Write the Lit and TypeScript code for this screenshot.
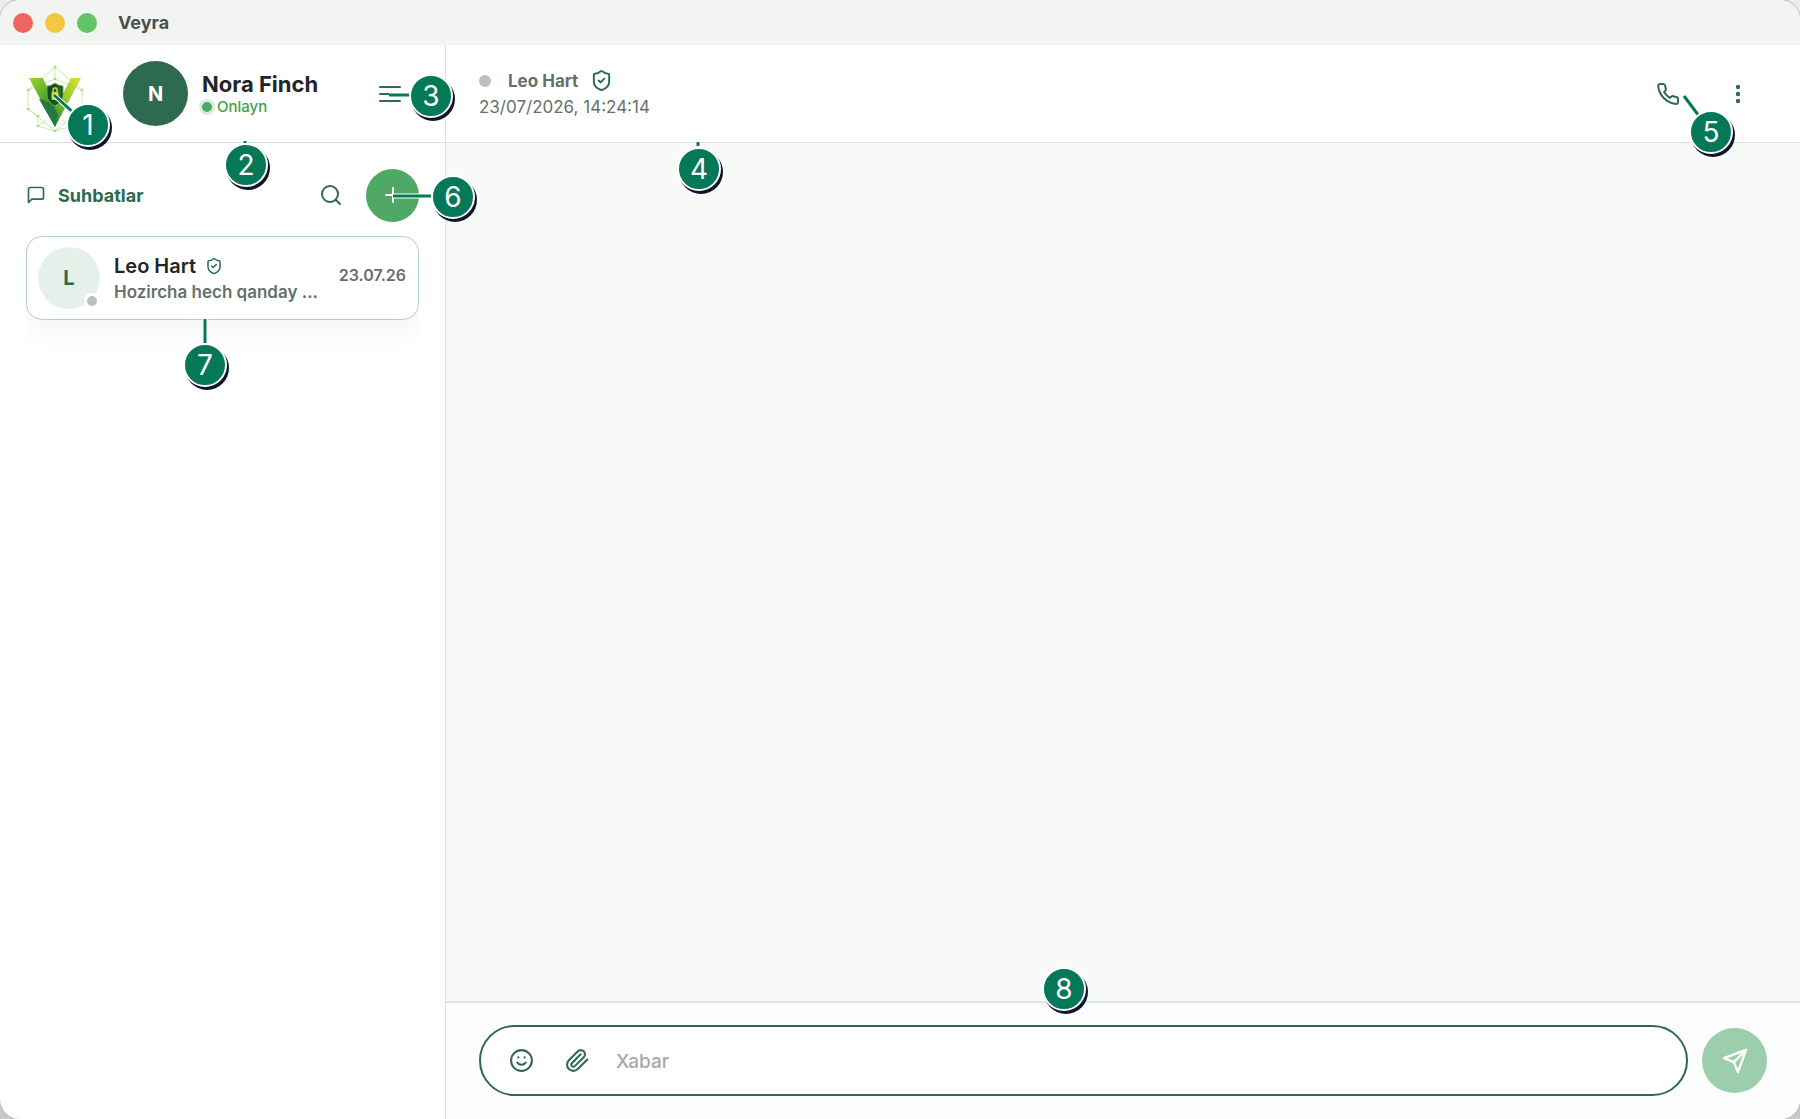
import { LitElement, html, css, svg } from "lit";
import { customElement, property } from "lit/decorators.js";
import { styleMap } from "lit/directives/style-map.js";

const icons: Record<string, unknown> = {
  shield: svg`<path d="M20 13c0 5-3.5 7.5-7.66 8.95a1 1 0 0 1-.67-.01C7.5 20.500 4 18 4 13V6a1 1 0 0 1 1-1c2 0 4.500-1.200 6.240-2.720a1.170 1.170 0 0 1 1.520 0C14.510 3.810 17 5 19 5a1 1 0 0 1 1 1z" /><path d="m9 12 2 2 4-4" />`,
  menu: svg`<path d="M2 5h20M2 12h15M2 19h20" />`,
  chat: svg`<path d="M21 15a2 2 0 0 1-2 2H7l-4 4V5a2 2 0 0 1 2-2h14a2 2 0 0 1 2 2z" />`,
  search: svg`<circle cx="11" cy="11" r="8" /><path d="m21 21-4.300-4.300" />`,
  plus: svg`<path d="M5 12h14M12 5v14" />`,
  phone: svg`<path d="M22 16.920v3a2 2 0 0 1-2.180 2 19.790 19.790 0 0 1-8.630-3.070 19.500 19.500 0 0 1-6-6 19.790 19.790 0 0 1-3.070-8.670A2 2 0 0 1 4.110 2h3a2 2 0 0 1 2 1.720 12.840 12.840 0 0 0 .7 2.810 2 2 0 0 1-.45 2.110L8.090 9.910a16 16 0 0 0 6 6l1.270-1.270a2 2 0 0 1 2.110-.45 12.840 12.840 0 0 0 2.810.7A2 2 0 0 1 22 16.920z" />`,
  dots: svg`<g fill="currentColor" stroke="none"><circle cx="12" cy="5" r="2.200" /><circle cx="12" cy="12" r="2.200" /><circle cx="12" cy="19" r="2.200" /></g>`,
  smile: svg`<circle cx="12" cy="12" r="10" /><path d="M8 14s1.500 2 4 2 4-2 4-2M9 9h.01M15 9h.01" />`,
  clip: svg`<path d="m21.440 11.050-9.190 9.190a6 6 0 0 1-8.490-8.490l8.570-8.570A4 4 0 1 1 18 8.840l-8.590 8.570a2 2 0 0 1-2.830-2.830l8.490-8.480" />`,
  send: svg`<path d="M21.500 2.500 2.500 9.500l8.500 3.500 3.500 8.500zM21.500 2.500 11 13" />`,
};

@customElement("vy-icon")
export class VyIcon extends LitElement {
  @property() name = "";
  @property({ type: Number }) size = 24;
  @property({ type: Number }) weight = 2;

  static styles = css`
    :host {
      display: inline-flex;
      flex: none;
    }
    .glyph {
      display: block;
      fill: none;
      stroke: currentColor;
      stroke-linecap: round;
      stroke-linejoin: round;
    }
  `;

  render() {
    return html`<svg
      class="glyph"
      viewBox="0 0 24 24"
      width=${this.size}
      height=${this.size}
      stroke-width=${this.weight}
      aria-hidden="true"
    >
      ${icons[this.name]}
    </svg>`;
  }
}

@customElement("vy-logo")
export class VyLogo extends LitElement {
  static styles = css`
    :host {
      display: block;
      flex: none;
    }
    .mark {
      display: block;
    }
  `;

  render() {
    const nodes = [
      [28, 2], [1, 25], [55, 25], [1, 44], [55, 44], [11, 61], [45, 61], [28, 66], [28, 14], [11, 51],
    ];
    return html`<svg class="mark" width="56" height="68" viewBox="0 0 56 68" role="img" aria-label="Veyra">
      <defs>
        <linearGradient id="left" x1="0" y1="0" x2="0.600" y2="1">
          <stop offset="0" stop-color="#a4d422" />
          <stop offset="0.450" stop-color="#5cae2c" />
          <stop offset="1" stop-color="#14693a" />
        </linearGradient>
        <linearGradient id="right" x1="1" y1="0" x2="0.300" y2="1">
          <stop offset="0" stop-color="#d3e534" />
          <stop offset="0.500" stop-color="#98cb2a" />
          <stop offset="1" stop-color="#2d8a3a" />
        </linearGradient>
      </defs>
      <g fill="none" stroke="#c3ebae" stroke-width="1">
        <path d="M28 2 1 25v19l27 22 27-22V25zM1 25l27-11 27 11M28 2v12M1 44l10 7v10l17 5 17-5V51l10-7M11 61l9-6M45 61l-9-6" />
      </g>
      <g fill="#a0e060">${nodes.map(([x, y]) => svg`<circle cx=${x} cy=${y} r="1.300" />`)}</g>
      <path d="M2 13h14l11 25 5 9-4 15z" fill="url(#left)" />
      <path d="M54 13H44L30 40l-6 4 4 18z" fill="url(#right)" />
      <path d="M12 34c9 2 15 6 19 15l-3 13z" fill="#237c3b" />
      <path d="M28 18c3 2 5 3 8 3v8c0 6-3 9-8 12-5-3-8-6-8-12v-8c3 0 5-1 8-3z" fill="#164b2a" stroke="#6aa943" stroke-width="1" />
      <path d="M28 20.500c2 1.500 4 2 6 2.300V29c0 4-2 7-6 9.500z" fill="#2c6b2c" />
      <rect x="24.500" y="27" width="7" height="8" rx="1" fill="#bdda38" />
      <path d="M26 27v-2a2 2 0 0 1 4 0v2" fill="none" stroke="#bdda38" stroke-width="1.500" />
    </svg>`;
  }
}

interface Callout {
  label: number;
  place: Record<string, string>;
  from?: [number, number];
  to?: [number, number];
}

const callouts: Callout[] = [
  { label: 1, place: { left: "88px", top: "125px" }, from: [-34, -30], to: [-12, -10] },
  { label: 2, place: { left: "246px", top: "165px" }, from: [-1, -24], to: [-1, -22] },
  { label: 3, place: { left: "431px", top: "96px" }, from: [-42, -1], to: [-22, -1] },
  { label: 4, place: { left: "699px", top: "169px" }, from: [-1, -27], to: [-1, -23] },
  { label: 5, place: { left: "calc(100% - 89px)", top: "132px" }, from: [-27, -36], to: [-12, -16] },
  { label: 6, place: { left: "453px", top: "197px" }, from: [-60, -1], to: [-22, -1] },
  { label: 7, place: { left: "205px", top: "365px" }, from: [0, -46], to: [0, -22] },
  { label: 8, place: { left: "calc(50% + 164px)", top: "calc(100% - 130px)" } },
];

@customElement("vy-callouts")
export class VyCallouts extends LitElement {
  static styles = css`
    :host {
      position: absolute;
      inset: 0;
      pointer-events: none;
    }
    .callout {
      position: absolute;
      width: 0;
      height: 0;
    }
    .leader {
      position: absolute;
      width: 1px;
      height: 1px;
      overflow: visible;
    }
    .halo {
      stroke: #fff;
      stroke-width: 5;
    }
    .line {
      stroke: #047857;
      stroke-width: 3;
    }
    .badge {
      position: absolute;
      left: -22px;
      top: -22px;
      box-sizing: border-box;
      width: 44px;
      height: 44px;
      border: 2px solid #fff;
      border-radius: 50%;
      background: #047857;
      box-shadow: 2px 3px 0 #11142d;
      color: #fff;
      font: 400 28px/40px Inter, "Open Sans", sans-serif;
      text-align: center;
    }
  `;

  render() {
    return callouts.map(
      ({ label, place, from, to }) => html`<div class="callout" style=${styleMap(place)}>
        ${from && to
          ? html`<svg class="leader" aria-hidden="true">
              <line class="halo" x1=${from[0]} y1=${from[1]} x2=${to[0]} y2=${to[1]} />
              <line class="line" x1=${from[0]} y1=${from[1]} x2=${to[0]} y2=${to[1]} />
            </svg>`
          : null}
        <span class="badge">${label}</span>
      </div>`
    );
  }
}

@customElement("app-root")
export class AppRoot extends LitElement {
  static styles = css`
    :host {
      display: block;
      background: linear-gradient(#ececec, #c8c8c8);
      color: #212529;
      font-family: Inter, "Liberation Sans", sans-serif;
      font-size: 16px;
    }
    * {
      box-sizing: border-box;
    }
    button {
      display: inline-flex;
      align-items: center;
      justify-content: center;
      flex: none;
      padding: 0;
      border: 0;
      background: none;
      color: #2d6a4f;
      font: inherit;
    }
    h1,
    h2,
    p {
      margin: 0;
    }
    .window {
      position: relative;
      display: flex;
      flex-direction: column;
      min-height: 100vh;
      overflow: hidden;
      border-radius: 20px;
      background: #fff;
      box-shadow: 0 0 0 1px #b8b8b8;
    }
    .titlebar {
      display: flex;
      align-items: center;
      gap: 12px;
      height: 45px;
      padding: 0 13px;
      background: #f2f4f2;
    }
    .light {
      width: 20px;
      height: 20px;
      border-radius: 50%;
    }
    .close {
      background: #ed6663;
    }
    .minimize {
      background: #f2c843;
    }
    .zoom {
      background: #62c466;
    }
    .app-name {
      padding-left: 9px;
      color: #4d4f4d;
      font-size: 18px;
      font-weight: 700;
    }
    .body {
      display: flex;
      flex: 1;
    }
    .sidebar {
      display: flex;
      flex: none;
      flex-direction: column;
      width: 446px;
      border-right: 1px solid #d8e5df;
    }
    .profile,
    .chat-header {
      display: flex;
      align-items: center;
      height: 98px;
      border-bottom: 1px solid #d3e2db;
    }
    .profile {
      padding: 0 43px 0 27px;
    }
    .logo {
      padding-top: 10px;
    }
    .avatar {
      display: flex;
      align-items: center;
      justify-content: center;
      flex: none;
      border-radius: 50%;
      font-weight: 700;
    }
    .avatar.own {
      width: 65px;
      height: 65px;
      margin: 0 14px 0 40px;
      background: #2d6a4f;
      color: #fff;
      font-size: 20px;
    }
    .who {
      flex: 1;
      padding-top: 2px;
    }
    .user-name {
      font-size: 22px;
      font-weight: 700;
      line-height: 24px;
    }
    .status {
      display: flex;
      align-items: center;
      gap: 5px;
      color: #43a047;
      font-size: 15px;
      font-weight: 500;
      line-height: 22px;
    }
    .online {
      width: 10px;
      height: 10px;
      border-radius: 50%;
      background: #4fa866;
      box-shadow: 0 0 0 3px #d8eedd;
    }
    .section {
      display: flex;
      align-items: center;
      height: 52px;
      margin: 26px 26px 15px;
      color: #2d6a4f;
    }
    .section-title {
      flex: 1;
      padding-left: 12px;
      font-size: 18px;
      font-weight: 700;
    }
    .add {
      width: 53px;
      height: 53px;
      margin-left: 23px;
      border-radius: 50%;
      background: #4fa866;
      color: #fff;
    }
    .list {
      overflow: hidden;
      margin: 0 26px;
      padding-bottom: 36px;
    }
    .item {
      display: flex;
      align-items: center;
      height: 84px;
      padding: 0 12px 0 11px;
      border: 1px solid #b0d3c3;
      border-radius: 16px;
      background: #fff;
      box-shadow: 0 14px 26px rgba(0, 0, 0, 0.04);
      color: inherit;
      text-decoration: none;
    }
    .avatar.peer {
      position: relative;
      width: 62px;
      height: 62px;
      margin-right: 14px;
      background: #e6f0eb;
      color: #2d6a4f;
      font-size: 20px;
    }
    .presence {
      border-radius: 50%;
      background: #b9c0c4;
    }
    .peer .presence {
      position: absolute;
      right: 0;
      bottom: 0;
      width: 16px;
      height: 16px;
      border: 3px solid #fff;
    }
    .summary {
      flex: 1;
      min-width: 0;
      padding-top: 2px;
    }
    .name-row {
      display: flex;
      align-items: center;
      gap: 9px;
      color: #2d6a4f;
    }
    .item-name {
      color: #212529;
      font-size: 20px;
      font-weight: 600;
      line-height: 26px;
    }
    .preview {
      color: #66706b;
      font-size: 17px;
      font-weight: 600;
      line-height: 26px;
      white-space: nowrap;
    }
    .date {
      padding-bottom: 6px;
      color: #66706b;
      font-size: 16px;
      font-weight: 600;
    }
    .chat {
      display: flex;
      flex: 1;
      flex-direction: column;
      min-width: 0;
      background: #f7faf7;
    }
    .chat-header {
      padding: 0 50px 0 33px;
      background: #fff;
    }
    .contact {
      flex: 1;
      color: #66706b;
      font-size: 17px;
      line-height: 26px;
    }
    .contact-row {
      display: flex;
      align-items: center;
      color: #2d6a4f;
    }
    .contact-row .presence {
      width: 12px;
      height: 12px;
      margin-right: 17px;
    }
    .contact-name {
      margin-right: 12px;
      color: #66706b;
      font-size: 17px;
      font-weight: 700;
    }
    .more {
      margin-left: 46px;
    }
    .messages {
      flex: 1;
    }
    .composer {
      display: flex;
      align-items: center;
      gap: 14px;
      padding: 22px 33px 23px;
      border-top: 2px solid #e0e8e3;
      background: #fbfefc;
    }
    .field {
      display: flex;
      align-items: center;
      flex: 1;
      height: 71px;
      padding: 0 28px;
      border: 2px solid #2d6a4f;
      border-radius: 36px;
      background: #fff;
    }
    .attach {
      margin: 0 26px 0 31px;
    }
    .message {
      flex: 1;
      min-width: 0;
      padding: 2px 0 0;
      border: 0;
      outline: 0;
      background: none;
      color: #212529;
      font: 500 19px/26px Inter, "Liberation Sans", sans-serif;
    }
    .message::placeholder {
      color: #a8a8a8;
      opacity: 1;
    }
    .send {
      width: 65px;
      height: 65px;
      border-radius: 50%;
      background: #9dceab;
      color: #fff;
    }
  `;

  render() {
    return html`<div class="window">
      <header class="titlebar">
        <button class="light close" aria-label="Close"></button>
        <button class="light minimize" aria-label="Minimize"></button>
        <button class="light zoom" aria-label="Zoom"></button>
        <span class="app-name">Veyra</span>
      </header>
      <div class="body">
        <aside class="sidebar">
          <div class="profile">
            <vy-logo class="logo"></vy-logo>
            <span class="avatar own">N</span>
            <div class="who">
              <h1 class="user-name">Nora Finch</h1>
              <p class="status"><span class="online"></span>Onlayn</p>
            </div>
            <button aria-label="Menu"><vy-icon name="menu" size="24"></vy-icon></button>
          </div>
          <div class="section">
            <vy-icon name="chat" size="20"></vy-icon>
            <h2 class="section-title">Suhbatlar</h2>
            <button aria-label="Search"><vy-icon name="search" size="24"></vy-icon></button>
            <button class="add" aria-label="New chat"><vy-icon name="plus" size="24"></vy-icon></button>
          </div>
          <nav class="list">
            <a class="item" href="#leo-hart">
              <span class="avatar peer">L<span class="presence"></span></span>
              <div class="summary">
                <div class="name-row">
                  <span class="item-name">Leo Hart</span>
                  <vy-icon name="shield" size="18"></vy-icon>
                </div>
                <p class="preview">Hozircha hech qanday ...</p>
              </div>
              <time class="date">23.07.26</time>
            </a>
          </nav>
        </aside>
        <main class="chat">
          <header class="chat-header">
            <div class="contact">
              <div class="contact-row">
                <span class="presence"></span>
                <h2 class="contact-name">Leo Hart</h2>
                <vy-icon name="shield" size="23"></vy-icon>
              </div>
              <p>23/07/2026, 14:24:14</p>
            </div>
            <button aria-label="Call"><vy-icon name="phone" size="24"></vy-icon></button>
            <button class="more" aria-label="More"><vy-icon name="dots" size="24"></vy-icon></button>
          </header>
          <section class="messages"></section>
          <form class="composer" @submit=${(e: Event) => e.preventDefault()}>
            <div class="field">
              <button type="button" aria-label="Emoji"><vy-icon name="smile" size="25"></vy-icon></button>
              <button type="button" class="attach" aria-label="Attach"><vy-icon name="clip" size="25"></vy-icon></button>
              <input class="message" type="text" placeholder="Xabar" aria-label="Xabar" />
            </div>
            <button class="send" aria-label="Send"><vy-icon name="send" size="28"></vy-icon></button>
          </form>
        </main>
      </div>
      <vy-callouts></vy-callouts>
    </div>`;
  }
}
